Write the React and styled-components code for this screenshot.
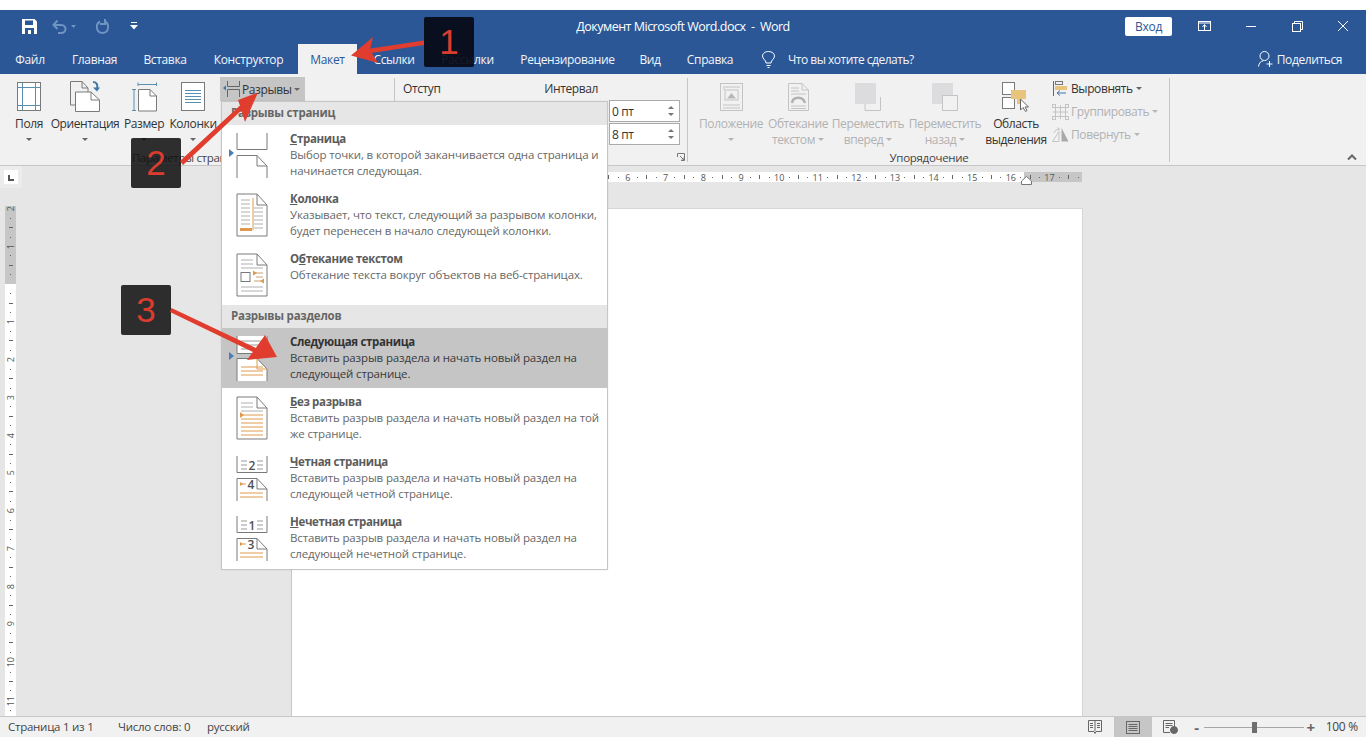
import React from 'react';
import styled, { createGlobalStyle } from 'styled-components';

const GlobalStyle = createGlobalStyle`
  html, body { margin: 0; padding: 0; background: #ffffff; overflow: hidden; }
  body { font-family: "Open Sans", "Noto Sans", "Liberation Sans", sans-serif; font-size: 12px; letter-spacing: -0.25px; }
  svg { display: block; }
`;

const Screen = styled.div`
  position: relative;
  width: 1366px;
  height: 737px;
  padding-top: 10px;
  box-sizing: border-box;
  display: flex;
  flex-direction: column;
  overflow: hidden;
`;

const TitleBar = styled.div`
  height: 34px;
  box-sizing: border-box;
  padding-bottom: 2px;
  background: #2b5797;
  color: #ffffff;
  display: grid;
  grid-template-columns: 1fr auto 1fr;
  align-items: center;
`;

const QuickAccess = styled.div`
  display: flex;
  align-items: center;
  padding-left: 22px;
`;

const QuickButton = styled.div`
  margin-right: ${(p) => p.$gap}px;
`;

const DocTitle = styled.div`
  font-size: 12.5px;
  letter-spacing: -0.5px;
  white-space: pre;
`;

const WindowControls = styled.div`
  display: flex;
  align-items: center;
  justify-content: flex-end;
  padding-right: 18px;
`;

const SignIn = styled.div`
  width: 47px;
  height: 19px;
  background: #ffffff;
  color: #2b5797;
  border-radius: 2px;
  display: flex;
  align-items: center;
  justify-content: center;
  margin-right: 26px;
`;

const ControlIcon = styled.div`
  margin-left: ${(p) => p.$left}px;
`;

const TabRow = styled.div`
  height: 30px;
  background: #2b5797;
  color: #f2f5fa;
  display: flex;
  padding-left: 2px;
  letter-spacing: -0.35px;
`;

const Tab = styled.div`
  width: ${(p) => p.$w}px;
  display: flex;
  align-items: center;
  justify-content: center;
  background: ${(p) => (p.$active ? '#f1f1f1' : 'transparent')};
  color: ${(p) => (p.$active ? '#2b5797' : 'inherit')};
`;

const TellMe = styled.div`
  display: flex;
  align-items: center;
  gap: 13px;
  margin-left: 11px;
  letter-spacing: -0.5px;
`;

const Share = styled.div`
  margin-left: auto;
  display: flex;
  align-items: center;
  gap: 4px;
  padding-right: 24px;
  letter-spacing: -0.4px;
`;

const Ribbon = styled.div`
  height: 92px;
  box-sizing: border-box;
  background: #f1f1f1;
  border-bottom: 1px solid #c6c6c6;
  display: flex;
  position: relative;
  letter-spacing: -0.4px;
`;

const Group = styled.div`
  width: ${(p) => p.$w}px;
  box-sizing: border-box;
  display: flex;
  flex-direction: column;
  position: relative;
  &::after {
    content: '';
    position: absolute;
    right: 0;
    top: 4px;
    bottom: 3px;
    width: 1px;
    background: #c6c6c6;
  }
`;

const GroupBody = styled.div`
  height: 76px;
  display: flex;
  padding-left: ${(p) => p.$left || 0}px;
`;

const GroupLabel = styled.div`
  height: 15px;
  line-height: 15px;
  text-align: center;
  color: #444444;
  font-size: 11.5px;
  letter-spacing: -0.3px;
  padding-right: ${(p) => p.$pad || 0}px;
`;

const BigButton = styled.div`
  width: ${(p) => p.$w}px;
  padding-top: 4px;
  display: flex;
  flex-direction: column;
  align-items: center;
  color: ${(p) => (p.$off ? '#b2b2b2' : '#333333')};
`;

const BigIcon = styled.div`
  height: 37.5px;
  display: flex;
  align-items: center;
`;

const BigLabel = styled.div`
  height: 16px;
  line-height: 16px;
  white-space: nowrap;
  display: flex;
  align-items: center;
  gap: 3px;
`;

const Caret = styled.span`
  width: 0;
  height: 0;
  border-left: 3px solid transparent;
  border-right: 3px solid transparent;
  border-top: 3px solid ${(p) => (p.$off ? '#b5b5b5' : '#666666')};
`;

const BreaksButton = styled.div`
  width: 85px;
  height: 24px;
  margin: 3px 0 0 -1px;
  background: #c5c5c5;
  color: #333333;
  display: flex;
  align-items: center;
  padding-left: 3px;
  box-sizing: border-box;
  gap: 2px;
`;

const ParagraphHead = styled.div`
  height: 26px;
  box-sizing: border-box;
  display: flex;
  align-items: center;
  color: #333333;
  padding: 2px 90px 0 8px;
  justify-content: space-between;
`;

const Spinners = styled.div`
  align-self: flex-end;
  margin-right: 8px;
  display: flex;
  flex-direction: column;
  gap: 1px;
`;

const Spinner = styled.div`
  width: 71px;
  height: 22px;
  box-sizing: border-box;
  background: #ffffff;
  border: 1px solid #ababab;
  display: flex;
  align-items: center;
  justify-content: space-between;
  padding: 0 5px 0 2px;
  color: #333333;
`;

const SpinArrows = styled.div`
  display: flex;
  flex-direction: column;
  gap: 4px;
`;

const SpinArrow = styled.span`
  width: 0;
  height: 0;
  border-left: 3px solid transparent;
  border-right: 3px solid transparent;
  ${(p) => (p.$up ? 'border-bottom: 3px solid #777777;' : 'border-top: 3px solid #777777;')}
`;

const Launcher = styled.div`
  position: absolute;
  right: 3px;
  bottom: 4px;
`;

const SmallColumn = styled.div`
  padding: 3px 0 0 2px;
  display: flex;
  flex-direction: column;
`;

const SmallButton = styled.div`
  height: 23px;
  display: flex;
  align-items: center;
  gap: 3px;
  color: ${(p) => (p.$off ? '#b2b2b2' : '#333333')};
`;

const SmallIcon = styled.div`
  width: 17px;
  margin-right: -1px;
  display: flex;
  justify-content: center;
`;

const Collapse = styled.div`
  position: absolute;
  right: 9px;
  bottom: 5px;
`;

const Workspace = styled.div`
  flex: 1;
  min-height: 0;
  background: #e6e6e6;
  display: grid;
  grid-template-columns: 291px 792px 1fr;
  grid-template-rows: 42px 1fr;
`;

const CornerCell = styled.div`
  padding: 0;
`;

const TabStop = styled.div`
  width: 22px;
  height: 22px;
  background: #ececec;
  display: flex;
  align-items: center;
  justify-content: center;
`;

const TabStopInner = styled.div`
  width: 14px;
  height: 14px;
  background: #ffffff;
  position: relative;
  &::after {
    content: '';
    position: absolute;
    left: 4px;
    top: 5px;
    width: 4px;
    height: 4px;
    border-left: 2px solid #555555;
    border-bottom: 2px solid #555555;
  }
`;

const RulerCell = styled.div`
  position: relative;
  grid-column: 2 / 4;
  padding-top: 6px;
`;

const HRuler = styled.div`
  width: 791px;
  height: 10px;
  overflow: hidden;
  box-sizing: border-box;
  padding-left: 30px;
  display: flex;
  background: linear-gradient(to right, #c6c6c6 110px, #ffffff 110px, #ffffff 733px, #c6c6c6 733px);
`;

const Mark = styled.div`
  flex: 0 0 9.4375px;
  display: flex;
  align-items: center;
  justify-content: center;
  font-size: 9px;
  letter-spacing: 0;
  color: #555555;
  white-space: nowrap;
`;

const Tick = styled.span`
  background: #666666;
  width: 1px;
  height: ${(p) => (p.$long ? 4 : 1)}px;
`;

const VTick = styled.span`
  background: #666666;
  height: 1px;
  width: ${(p) => (p.$long ? 4 : 1)}px;
`;

const IndentMarker = styled.div`
  position: absolute;
  left: 730px;
  top: 10px;
`;

const SideCell = styled.div`
  padding-left: 5px;
`;

const VRuler = styled.div`
  width: 11px;
  height: 512px;
  margin-top: -4px;
  overflow: hidden;
  display: flex;
  flex-direction: column;
  background: linear-gradient(to bottom, transparent 2px, #c6c6c6 2px, #c6c6c6 80px, #ffffff 80px);
`;

const VMark = styled.div`
  flex: 0 0 9.4375px;
  display: flex;
  align-items: center;
  justify-content: center;
  font-size: 9px;
  letter-spacing: 0;
  color: #555555;
`;

const VNumber = styled.span`
  writing-mode: vertical-rl;
  transform: rotate(180deg);
`;

const Page = styled.div`
  background: #ffffff;
  box-shadow: inset 1px 0 0 #c6c6c6, inset -1px 0 0 #d6d6d6, inset 0 1px 0 #d6d6d6;
`;

const StatusBar = styled.div`
  height: 21px;
  box-sizing: border-box;
  background: #f1f1f1;
  border-top: 1px solid #c6c6c6;
  display: flex;
  align-items: center;
  color: #444444;
  font-size: 11.5px;
  padding-left: 8px;
`;

const StatusText = styled.div`
  width: ${(p) => p.$w}px;
  white-space: nowrap;
  padding-bottom: 2px;
`;

const StatusRight = styled.div`
  margin-left: auto;
  height: 100%;
  display: flex;
  align-items: center;
  padding-right: 8px;
`;

const ViewButton = styled.div`
  width: ${(p) => p.$w}px;
  height: 100%;
  display: flex;
  align-items: center;
  justify-content: center;
  background: ${(p) => (p.$active ? '#c6c6c6' : 'transparent')};
`;

const ZoomSign = styled.div`
  width: 14px;
  text-align: center;
  font-size: 15px;
  font-weight: 700;
  line-height: 15px;
  color: #666666;
`;

const ZoomTrack = styled.div`
  width: 100px;
  height: 1px;
  background: #a6a6a6;
  position: relative;
`;

const ZoomThumb = styled.div`
  position: absolute;
  left: 48px;
  top: -5px;
  width: 5px;
  height: 11px;
  background: #6e6e6e;
`;

const ZoomValue = styled.div`
  margin-left: 8px;
  font-size: 12px;
  padding-bottom: 2px;
`;

const Menu = styled.div`
  position: absolute;
  left: 221px;
  top: 101px;
  width: 387px;
  height: 469px;
  box-sizing: border-box;
  background: #ffffff;
  border: 1px solid #c6c6c6;
  box-shadow: 0 0 2px rgba(0, 0, 0, 0.08);
`;

const MenuHeader = styled.div`
  height: 23px;
  background: #e6e6e6;
  color: #666666;
  font-weight: 700;
  font-size: 11.5px;
  line-height: 21px;
  padding-left: 9px;
`;

const MenuItem = styled.div`
  height: 60px;
  display: flex;
  background: ${(p) => (p.$hover ? '#c5c5c5' : 'transparent')};
`;

const MenuMarker = styled.div`
  width: 14px;
  padding: 24px 0 0 7px;
  box-sizing: border-box;
`;

const MarkerArrow = styled.div`
  width: 0;
  height: 0;
  border-top: 4px solid transparent;
  border-bottom: 4px solid transparent;
  border-left: 5px solid #4a7fb5;
`;

const MenuIcon = styled.div`
  width: 54px;
  padding-top: 8px;
`;

const MenuText = styled.div`
  padding-top: 5px;
  color: ${(p) => (p.$hover ? '#3a3a3a' : '#686868')};
  font-size: 11.5px;
  line-height: 15.5px;
  letter-spacing: -0.15px;
  white-space: pre;
`;

const MenuTitle = styled.div`
  font-weight: 700;
  line-height: 17px;
  letter-spacing: -0.35px;
  color: ${(p) => (p.$hover ? '#333333' : '#5c5c5c')};
`;

const Badge = styled.div`
  position: absolute;
  left: ${(p) => p.$x}px;
  top: ${(p) => p.$y}px;
  width: 50px;
  height: 50px;
  border-radius: 2px;
  background: ${(p) => p.$bg};
  color: #dc3c2e;
  font-family: "Liberation Sans", Arial, sans-serif;
  font-size: 35px;
  letter-spacing: 0;
  display: flex;
  align-items: center;
  justify-content: center;
`;

const ArrowLayer = styled.svg`
  position: absolute;
  left: 0;
  top: 0;
  pointer-events: none;
`;

const G = '#7a7a7a';
const B = '#5b8fb0';
const O = '#dd9a4e';
const D = '#c4c4c4';

const MarginsIcon = () => (
  <svg width="24" height="29" viewBox="0 0 24 29" fill="none">
    <rect x="0.5" y="0.5" width="23" height="28" stroke={G} fill="#fff" />
    <path d="M5.5 1V28M18.5 1V28M1 5.5H23M1 23.5H23" stroke={B} />
  </svg>
);

const OrientationIcon = () => (
  <svg width="30" height="31" viewBox="0 0 30 31" fill="none">
    <path d="M.5 .5H12L18 7V11M5 24H.5V.5" stroke={G} />
    <path d="M5.5 11H21L29.5 19V30.5H5.5Z" stroke={G} fill="#fff" />
    <path d="M21 11V19H29.5M12 .5V7H18" stroke={G} />
    <path d="M23 1C27 1 28 4 27 8" stroke="#3f77a8" strokeWidth="2" />
    <path d="M23 6.5L27 10.5 30 6.5Z" fill="#3f77a8" />
  </svg>
);

const SizeIcon = () => (
  <svg width="25" height="30" viewBox="0 0 25 30" fill="none">
    <path d="M6 .5V4M24.5 .5V4M6 2.5H24.5M0 7.5H4M0 28.5H4M2 7.5V28.5" stroke={B} />
    <path d="M6.5 7.5H18L24.5 14V29H6.5Z" stroke={G} fill="#fff" />
    <path d="M18 7.5V14H24.5" stroke={G} />
  </svg>
);

const ColumnsIcon = () => (
  <svg width="24" height="29" viewBox="0 0 24 29" fill="none">
    <rect x="0.5" y="0.5" width="23" height="28" stroke={G} fill="#fff" />
    <path d="M4 8.5H20M4 11.5H20M4 14.5H20M4 17.5H20M4 20.5H20" stroke={B} />
  </svg>
);

const BreaksIcon = () => (
  <svg width="17" height="16" viewBox="0 0 17 16" fill="none">
    <path d="M4.5 0V5.5H16.5V0M4.5 16V8.5H16.5V16" stroke="#666" />
    <path d="M0 7L3 4.5V9.5Z" fill="#3f77a8" />
  </svg>
);

const PositionIcon = () => (
  <svg width="23" height="28" viewBox="0 0 23 28" fill="none">
    <rect x=".5" y=".5" width="22" height="27" stroke={D} />
    <path d="M3 4H20M3 22H20M3 25H20M3 6H5" stroke={D} />
    <rect x="5" y="7" width="13" height="10" stroke={D} />
    <path d="M7 15.5L11.5 10 16 15.5Z" fill="#b8b8b8" />
  </svg>
);

const WrapIcon = () => (
  <svg width="21" height="28" viewBox="0 0 21 28" fill="none">
    <path d="M.5 .5H14L20.5 7V27.5H.5Z" stroke={D} />
    <path d="M14 .5V7H20.5M3 5H11M3 8H11M3 11H18M3 23H18M3 25.5H18" stroke={D} />
    <path d="M4 20C5 13 15 13 17 20" stroke="#b0b0b0" strokeWidth="2.5" />
  </svg>
);

const ForwardIcon = () => (
  <svg width="26" height="28" viewBox="0 0 26 28" fill="none">
    <path d="M25.5 14V27.5H10V21" stroke={D} />
    <rect x="0" y="0" width="21" height="21" fill="#dcdbdd" />
  </svg>
);

const BackwardIcon = () => (
  <svg width="26" height="28" viewBox="0 0 26 28" fill="none">
    <rect x="0" y="0" width="21" height="21" fill="#dcdbdd" />
    <rect x="10.5" y="12.5" width="15" height="15" stroke={D} fill="#f1f1f1" />
  </svg>
);

const SelectionIcon = () => (
  <svg width="28" height="30" viewBox="0 0 28 30" fill="none">
    <rect x=".5" y=".5" width="12" height="12" stroke={G} fill="#fff" />
    <rect x=".5" y="15.5" width="12" height="11" stroke={G} fill="#fff" />
    <path d="M9 8H24V17H19V22H15V17H9Z" fill="#e9c47c" />
    <path d="M18.5 17V28L21 25.5 23.5 29.5 25 28.5 23 25H26.5Z" fill="#fff" stroke="#666" />
  </svg>
);

const AlignIcon = () => (
  <svg width="15" height="15" viewBox="0 0 15 15" fill="none">
    <path d="M.5 0V15" stroke="#666" />
    <rect x="2.5" y=".5" width="7" height="3" stroke="#777" />
    <rect x="2" y="5" width="12" height="4" fill="#e9c47c" />
    <path d="M13 12H4M7 9.5L4 12 7 14.5" stroke="#3f77a8" />
  </svg>
);

const GroupIcon = () => (
  <svg width="17" height="16" viewBox="0 0 17 16" fill="none" stroke={D}>
    <rect x="3.5" y="3.5" width="10" height="9" />
    <rect x=".5" y=".5" width="3" height="3" />
    <rect x="13.5" y=".5" width="3" height="3" />
    <rect x=".5" y="12.5" width="3" height="3" />
    <rect x="13.5" y="12.5" width="3" height="3" />
    <path d="M8.5 1V15M1 8H16" />
  </svg>
);

const RotateIcon = () => (
  <svg width="17" height="15" viewBox="0 0 17 15" fill="none">
    <path d="M7 14.5H.5L7 4.5Z" stroke={D} />
    <path d="M9.5 1V14.5H16.5Z" fill="#a9a9a9" />
    <path d="M2 6C3 3 5 2 7 2M5.5 .5L7.5 2 5.5 3.5" stroke={D} />
  </svg>
);

const PageOutline = ({ y = 1, h = 42 }) => (
  <>
    <path d={`M1 ${y}H21L31 ${y + 11}V${y + h}H1Z`} stroke={G} fill="#fff" />
    <path d={`M21 ${y}V${y + 11}H31`} stroke={G} />
  </>
);

const SvgBox = ({ children }) => (
  <svg width="32" height="46" viewBox="0 0 32 46" fill="none">
    {children}
  </svg>
);

const PageBreakIcon = () => (
  <SvgBox>
    <path d="M1 0V16.5H31V0" stroke={G} />
    <path d="M1 45V22.5H21L31 33V45M21 22.5V33H31" stroke={G} />
  </SvgBox>
);

const ColumnBreakIcon = () => (
  <SvgBox>
    <PageOutline />
    <path d="M5 7H14M5 11H14M5 15H14M5 19H14M5 23H14M5 27H14M5 31H14M18 15H27M18 19H27M18 23H27M18 27H27M18 31H27M18 35H27" stroke="#b0b0b0" />
    <path d="M17 5V37" stroke={O} />
    <rect x="4" y="35" width="12" height="3" fill={O} />
  </SvgBox>
);

const WrapBreakIcon = () => (
  <SvgBox>
    <PageOutline />
    <path d="M5 7H17M5 11H17M5 15H27M5 34H27M5 38H27" stroke="#b0b0b0" />
    <rect x="5" y="19.5" width="9" height="9" stroke={G} />
    <path d="M18 20H27M20 24H27M18 28H27" stroke="#c9a26f" />
    <path d="M17 17.5L21 20 17 22.5ZM28 25.5L24 28 28 30.5Z" fill={O} />
  </SvgBox>
);

const NextPageIcon = () => (
  <SvgBox>
    <path d="M1 0V17.5H31V0" stroke={G} fill="#fff" />
    <path d="M5 5H27M5 9H27M5 13H27" stroke="#9a9a9a" />
    <path d="M1 45V22.5H21L31 33V45" stroke={G} fill="#fff" />
    <path d="M21 22.5V33H31M5 31H27M5 35H27M5 39H27" stroke={O} />
  </SvgBox>
);

const ContinuousIcon = () => (
  <SvgBox>
    <PageOutline />
    <path d="M5 7H17M5 11H17M5 15H27" stroke="#b0b0b0" />
    <path d="M5 19H27M5 23H27M5 27H27M5 31H27M5 35H27M5 39H27" stroke={O} />
    <path d="M4 16L8 19 4 22Z" fill={O} />
  </SvgBox>
);

const NumberedIcon = ({ top, bottom }) => (
  <SvgBox>
    <path d="M1 0V16.5H31V0" stroke={G} />
    <path d="M5 5H11M21 5H27M5 9H11M21 9H27M5 13H11M21 13H27" stroke="#9a9a9a" />
    <text x="16" y="14" textAnchor="middle" fontSize="12" fontWeight="600" letterSpacing="0" fill="#4f4f4f" fontFamily="Open Sans">{top}</text>
    <path d="M1 45V22.5H21L31 33V45M21 22.5V33H31" stroke={G} />
    <path d="M4 28H10M4 37H27M4 41H27" stroke={O} />
    <path d="M4 26L7 28 4 30Z" fill={O} />
    <text x="15" y="33" textAnchor="middle" fontSize="12" fontWeight="600" letterSpacing="0" fill="#4f4f4f" fontFamily="Open Sans">{bottom}</text>
  </SvgBox>
);

const ruler = Array.from({ length: 84 }, (_, i) => i);

const tabs = [
  ['Файл', 56], ['Главная', 73], ['Вставка', 68], ['Конструктор', 99], ['Макет', 59],
  ['Ссылки', 74], ['Рассылки', 73], ['Рецензирование', 127], ['Вид', 38], ['Справка', 82],
];

const pageItems = [
  { key: 'С', rest: 'траница', text: 'Выбор точки, в которой заканчивается одна страница и\nначинается следующая.', Icon: PageBreakIcon, marker: true },
  { key: 'К', rest: 'олонка', text: 'Указывает, что текст, следующий за разрывом колонки,\nбудет перенесен в начало следующей колонки.', Icon: ColumnBreakIcon },
  { pre: 'О', key: 'б', rest: 'текание текстом', text: 'Обтекание текста вокруг объектов на веб-страницах.', Icon: WrapBreakIcon },
];

const sectionItems = [
  { rest: 'Следующая страница', text: 'Вставить разрыв раздела и начать новый раздел на\nследующей странице.', Icon: NextPageIcon, marker: true, hover: true },
  { key: 'Б', rest: 'ез разрыва', text: 'Вставить разрыв раздела и начать новый раздел на той\nже странице.', Icon: ContinuousIcon },
  { key: 'Ч', rest: 'етная страница', text: 'Вставить разрыв раздела и начать новый раздел на\nследующей четной странице.', icon: ['2', '4'] },
  { key: 'Н', rest: 'ечетная страница', text: 'Вставить разрыв раздела и начать новый раздел на\nследующей нечетной странице.', icon: ['1', '3'] },
];

function BreakItem({ item }) {
  const { Icon } = item;
  return (
    <MenuItem $hover={item.hover}>
      <MenuMarker>{item.marker && <MarkerArrow />}</MenuMarker>
      <MenuIcon>
        {Icon ? <Icon /> : <NumberedIcon top={item.icon[0]} bottom={item.icon[1]} />}
      </MenuIcon>
      <MenuText $hover={item.hover}>
        <MenuTitle $hover={item.hover}>
          {item.pre}
          {item.key && <u>{item.key}</u>}
          {item.rest}
        </MenuTitle>
        {item.text}
      </MenuText>
    </MenuItem>
  );
}

export default function App() {
  return (
    <Screen>
      <GlobalStyle />
      <TitleBar>
        <QuickAccess>
          <QuickButton $gap={15}>
            <svg width="15" height="15" viewBox="0 0 15 15">
              <path d="M0 0H12.5L15 2.5V15H0Z" fill="#fff" />
              <rect x="3" y="1.5" width="8" height="4.5" fill="#2b5797" />
              <rect x="3" y="9" width="9" height="6" fill="#2b5797" />
              <rect x="6" y="11" width="3" height="4" fill="#fff" />
            </svg>
          </QuickButton>
          <QuickButton $gap={20}>
            <svg width="24" height="15" viewBox="0 0 24 15" fill="none" stroke="#6f93c2" strokeWidth="2">
              <path d="M1.5 6H9C15 6 15 14 9 14H6M5.5 1.5L1.5 6 5.5 10" />
              <path d="M19 6L24 6 21.5 9Z" fill="#6f93c2" stroke="none" />
            </svg>
          </QuickButton>
          <QuickButton $gap={21}>
            <svg width="13" height="15" viewBox="0 0 13 15" fill="none" stroke="#6f93c2" strokeWidth="2">
              <path d="M4 2.5C-1 5 0 14 6.5 14C13 14 14 5 9 2.5M9 0V5H4" />
            </svg>
          </QuickButton>
          <QuickButton $gap={0}>
            <svg width="8" height="8" viewBox="0 0 8 8" fill="#fff">
              <rect x="1" y="0" width="6" height="1" />
              <path d="M0 3H8L4 7.5Z" />
            </svg>
          </QuickButton>
        </QuickAccess>
        <DocTitle>Документ Microsoft Word.docx  -  Word</DocTitle>
        <WindowControls>
          <SignIn>Вход</SignIn>
          <ControlIcon $left={0}>
            <svg width="13" height="10" viewBox="0 0 13 10" fill="none" stroke="#fff">
              <rect x=".5" y=".5" width="12" height="9" />
              <path d="M0 2H13" />
              <path d="M6.5 9V4M4.5 6L6.5 3.5 8.5 6" />
            </svg>
          </ControlIcon>
          <ControlIcon $left={35}>
            <svg width="10" height="1" viewBox="0 0 10 1"><rect width="10" height="1" fill="#fff" /></svg>
          </ControlIcon>
          <ControlIcon $left={36}>
            <svg width="11" height="11" viewBox="0 0 11 11" fill="none" stroke="#fff">
              <rect x=".5" y="2.5" width="8" height="8" />
              <path d="M2.5 2.5V.5H10.5V8.5H8.5" />
            </svg>
          </ControlIcon>
          <ControlIcon $left={35}>
            <svg width="10" height="10" viewBox="0 0 10 10" stroke="#fff" fill="none">
              <path d="M0 0L10 10M10 0L0 10" />
            </svg>
          </ControlIcon>
        </WindowControls>
      </TitleBar>

      <TabRow>
        {tabs.map(([label, w]) => (
          <Tab key={label} $w={w} $active={label === 'Макет'}>{label}</Tab>
        ))}
        <TellMe>
          <svg width="13" height="17" viewBox="0 0 13 17" fill="none" stroke="#fff">
            <path d="M4 12C4 9 .5 8 .5 5C.5 2.5 3 .5 6.5 .5C10 .5 12.5 2.5 12.5 5C12.5 8 9 9 9 12ZM4.5 14.5H8.5M5.5 16.5H7.5" />
          </svg>
          Что вы хотите сделать?
        </TellMe>
        <Share>
          <svg width="15" height="16" viewBox="0 0 15 16" fill="none" stroke="#fff">
            <circle cx="6.5" cy="5" r="4.5" />
            <path d="M.5 15.5C1 12 3 10 5 10M11.5 10V16M8.5 13H14.5" />
          </svg>
          Поделиться
        </Share>
      </TabRow>

      <Ribbon>
        <Group $w={395}>
          <GroupBody $left={11}>
            <BigButton $w={36}>
              <BigIcon><MarginsIcon /></BigIcon>
              <BigLabel>Поля</BigLabel>
              <BigLabel><Caret /></BigLabel>
            </BigButton>
            <BigButton $w={76}>
              <BigIcon><OrientationIcon /></BigIcon>
              <BigLabel>Ориентация</BigLabel>
              <BigLabel><Caret /></BigLabel>
            </BigButton>
            <BigButton $w={42}>
              <BigIcon><SizeIcon /></BigIcon>
              <BigLabel>Размер</BigLabel>
              <BigLabel><Caret /></BigLabel>
            </BigButton>
            <BigButton $w={56}>
              <BigIcon><ColumnsIcon /></BigIcon>
              <BigLabel>Колонки</BigLabel>
              <BigLabel><Caret /></BigLabel>
            </BigButton>
            <BreaksButton>
              <BreaksIcon />
              Разрывы
              <Caret />
            </BreaksButton>
          </GroupBody>
          <GroupLabel $pad={14}>Параметры страницы</GroupLabel>
        </Group>

        <Group $w={293}>
          <ParagraphHead>
            <span>Отступ</span>
            <span>Интервал</span>
          </ParagraphHead>
          <Spinners>
            <Spinner>0 пт<SpinArrows><SpinArrow $up /><SpinArrow /></SpinArrows></Spinner>
            <Spinner>8 пт<SpinArrows><SpinArrow $up /><SpinArrow /></SpinArrows></Spinner>
          </Spinners>
          <Launcher>
            <svg width="8" height="8" viewBox="0 0 8 8" fill="none" stroke="#777">
              <path d="M.5 4V.5H7.5V7.5H4M3 3L7 7M7 4.5V7H4.5" />
            </svg>
          </Launcher>
        </Group>

        <Group $w={482}>
          <GroupBody $left={6}>
            <BigButton $w={74} $off>
              <BigIcon><PositionIcon /></BigIcon>
              <BigLabel>Положение</BigLabel>
              <BigLabel><Caret $off /></BigLabel>
            </BigButton>
            <BigButton $w={60} $off>
              <BigIcon><WrapIcon /></BigIcon>
              <BigLabel>Обтекание</BigLabel>
              <BigLabel>текстом<Caret $off /></BigLabel>
            </BigButton>
            <BigButton $w={80} $off>
              <BigIcon><ForwardIcon /></BigIcon>
              <BigLabel>Переместить</BigLabel>
              <BigLabel>вперед<Caret $off /></BigLabel>
            </BigButton>
            <BigButton $w={74} $off>
              <BigIcon><BackwardIcon /></BigIcon>
              <BigLabel>Переместить</BigLabel>
              <BigLabel>назад<Caret $off /></BigLabel>
            </BigButton>
            <BigButton $w={68}>
              <BigIcon><SelectionIcon /></BigIcon>
              <BigLabel>Область</BigLabel>
              <BigLabel>выделения</BigLabel>
            </BigButton>
            <SmallColumn>
              <SmallButton><SmallIcon><AlignIcon /></SmallIcon>Выровнять<Caret /></SmallButton>
              <SmallButton $off><SmallIcon><GroupIcon /></SmallIcon>Группировать<Caret $off /></SmallButton>
              <SmallButton $off><SmallIcon><RotateIcon /></SmallIcon>Повернуть<Caret $off /></SmallButton>
            </SmallColumn>
          </GroupBody>
          <GroupLabel>Упорядочение</GroupLabel>
        </Group>

        <Collapse>
          <svg width="10" height="6" viewBox="0 0 10 6" fill="none" stroke="#666" strokeWidth="2">
            <path d="M1 5.5L5 1.5 9 5.5" />
          </svg>
        </Collapse>
      </Ribbon>

      <Workspace>
        <CornerCell>
          <TabStop><TabStopInner /></TabStop>
        </CornerCell>
        <RulerCell>
          <HRuler>
            {ruler.map((i) => {
              // everything left of 6 sits under the open menu
              const value = i / 4 - 2;
              return (
                <Mark key={i}>
                  {i % 4 === 0 && value >= 6 && value <= 17 ? value : null}
                  {i % 4 === 2 && <Tick $long />}
                  {i % 2 === 1 && <Tick />}
                </Mark>
              );
            })}
          </HRuler>
          <IndentMarker>
            <svg width="11" height="9" viewBox="0 0 11 9" fill="#fff" stroke="#777">
              <path d="M.5 8.5V5L5.5 .5 10.5 5V8.5Z" />
            </svg>
          </IndentMarker>
        </RulerCell>
        <SideCell>
          <VRuler>
            {Array.from({ length: 54 }, (_, i) => i).map((i) => (
              <VMark key={i}>
                {i % 4 === 0 && i !== 8 && <VNumber>{Math.abs(i / 4 - 2)}</VNumber>}
                {i % 4 === 2 && <VTick $long />}
                {i % 2 === 1 && <VTick />}
              </VMark>
            ))}
          </VRuler>
        </SideCell>
        <Page />
      </Workspace>

      <StatusBar>
        <StatusText $w={110}>Страница 1 из 1</StatusText>
        <StatusText $w={89}>Число слов: 0</StatusText>
        <StatusText $w={60}>русский</StatusText>
        <StatusRight>
          <ViewButton $w={38}>
            <svg width="14" height="14" viewBox="0 0 14 14" fill="none" stroke="#666">
              <path d="M.5 .5H13.5V11.5H8L7 13.5 6 11.5H.5ZM7 .5V11M2 3.5H5M2 5.5H5M2 7.5H5M9 3.5H12M9 5.5H12M9 7.5H12" />
            </svg>
          </ViewButton>
          <ViewButton $w={38} $active>
            <svg width="14" height="13" viewBox="0 0 14 13" fill="none" stroke="#666">
              <rect x=".5" y=".5" width="13" height="12" />
              <path d="M2.5 3.5H11.5M2.5 5.5H11.5M2.5 7.5H11.5M2.5 9.5H11.5" />
            </svg>
          </ViewButton>
          <ViewButton $w={38}>
            <svg width="15" height="14" viewBox="0 0 15 14" fill="none" stroke="#666">
              <path d="M7 12.5H.5V.5H11.5V6M2.5 3.5H9.5M2.5 5.5H9.5M2.5 7.5H6" />
              <circle cx="11" cy="10" r="3.5" fill="#666" />
            </svg>
          </ViewButton>
          <ZoomSign>-</ZoomSign>
          <ZoomTrack><ZoomThumb /></ZoomTrack>
          <ZoomSign>+</ZoomSign>
          <ZoomValue>100 %</ZoomValue>
        </StatusRight>
      </StatusBar>

      <Menu>
        <MenuHeader>Разрывы страниц</MenuHeader>
        {pageItems.map((item) => <BreakItem key={item.text} item={item} />)}
        <MenuHeader>Разрывы разделов</MenuHeader>
        {sectionItems.map((item) => <BreakItem key={item.text} item={item} />)}
      </Menu>

      <Badge $x={424} $y={17} $bg="rgba(6, 10, 20, 0.93)">1</Badge>
      <Badge $x={131} $y={138} $bg="rgba(18, 18, 18, 0.88)">2</Badge>
      <Badge $x={121} $y={285} $bg="#2d2d2d">3</Badge>

      <ArrowLayer width="1366" height="737" viewBox="0 0 1366 737">
        <g fill="#e03d2e" stroke="none">
          <path d="M424 40.5L424 45 368 53.5 367.5 49Z" />
          <path d="M351 55.5L373 37 370 50 378 63Z" />
          <path d="M180 161L183 165 244 108 241 104.5Z" />
          <path d="M258 92.5L245 122 240.5 107 238 100Z" />
          <path d="M171.5 308L170 312 255 353 257 348.5Z" />
          <path d="M277 357L247 360 255 349 265 335Z" />
        </g>
      </ArrowLayer>
    </Screen>
  );
}
